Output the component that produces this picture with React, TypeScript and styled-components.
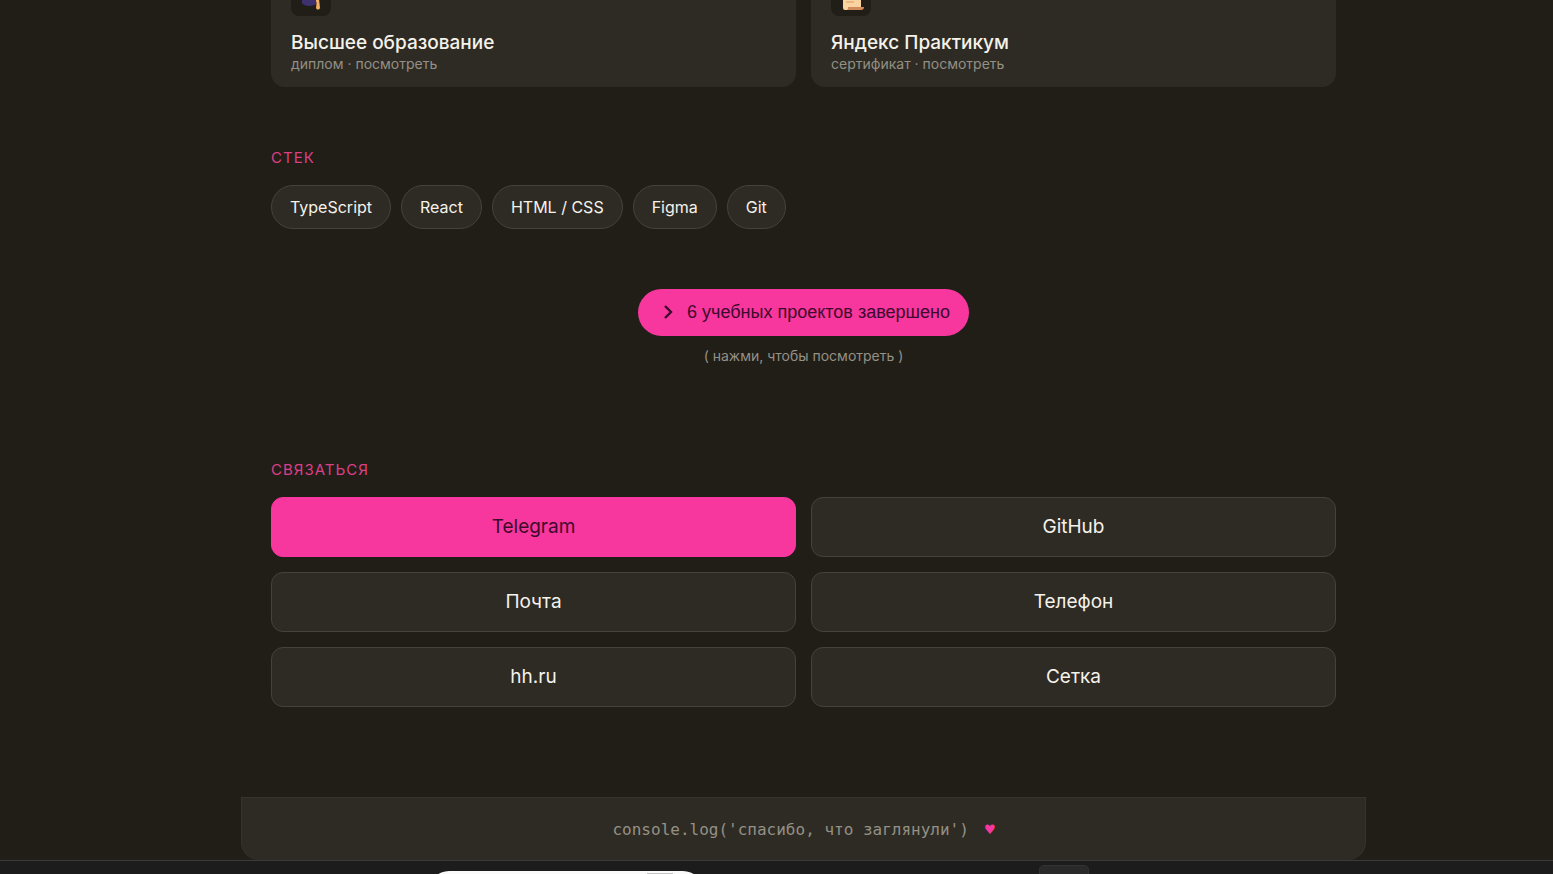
import React from 'react';
import styled, { createGlobalStyle } from 'styled-components';

const color = {
  page: '#211e18',
  surface: '#2e2b24',
  line: '#45423b',
  text: '#f5f2ea',
  muted: '#949085',
  accent: '#f7379e',
  accentText: '#dd3f86',
  onAccent: '#3d0a2c',
};

const GlobalStyle = createGlobalStyle`
  * { box-sizing: border-box; }
  body {
    margin: 0;
    background: ${color.page};
    color: ${color.text};
    font-family: Inter, "Liberation Sans", sans-serif;
  }
`;

const Shell = styled.div`
  display: flex;
  flex-direction: column;
  height: 100vh;
  overflow: hidden;
`;

const Viewport = styled.main`
  flex: 1;
  min-height: 0;
  display: flex;
  flex-direction: column;
  justify-content: flex-end;
  align-items: center;
  padding-left: 54px;
  overflow: hidden;
`;

const Page = styled.div`
  width: 100%;
  max-width: 1125px;
  flex-shrink: 0;
`;

const Content = styled.div`
  display: flex;
  flex-direction: column;
  padding: 0 30px 90px;
`;

const TwoColumns = styled.div`
  display: grid;
  grid-template-columns: 1fr 1fr;
  gap: 15px;
`;

const Card = styled.a`
  display: flex;
  flex-direction: column;
  padding: 20px 20px 14px;
  border-radius: 14px;
  background: ${color.surface};
  color: inherit;
  text-decoration: none;
`;

const CardIcon = styled.span`
  display: flex;
  align-items: center;
  justify-content: center;
  width: 40px;
  height: 40px;
  margin-bottom: 15px;
  border-radius: 8px;
  background: ${color.page};
`;

const CardTitle = styled.span`
  font-size: 19px;
  line-height: 24px;
  font-weight: 500;
`;

const CardNote = styled.span`
  font-size: 14px;
  line-height: 18px;
  color: ${color.muted};
`;

const Section = styled.section`
  margin-top: 60px;
`;

const SectionTitle = styled.h2`
  margin: 0 0 16px;
  font-size: 15px;
  line-height: 22px;
  font-weight: 400;
  letter-spacing: 1px;
  text-transform: uppercase;
  color: ${color.accentText};
`;

const Pills = styled.ul`
  display: flex;
  flex-wrap: wrap;
  gap: 10px;
  margin: 0;
  padding: 0;
  list-style: none;
`;

const Pill = styled.li`
  padding: 10px 18px;
  border: 1px solid ${color.line};
  border-radius: 22px;
  background: ${color.surface};
  font-size: 16px;
  line-height: 22px;
`;

const Projects = styled.div`
  display: flex;
  flex-direction: column;
  align-items: center;
  gap: 10px;
  margin: 60px 0 33px;
`;

const ProjectsButton = styled.button`
  display: flex;
  align-items: center;
  gap: 8px;
  height: 47px;
  padding: 0 19px 1px;
  border: 0;
  border-radius: 24px;
  background: ${color.accent};
  color: ${color.onAccent};
  font: 400 18px/24px "Liberation Sans", Arial, sans-serif;
`;

const Hint = styled.span`
  font-size: 14px;
  line-height: 20px;
  color: ${color.muted};
`;

const ContactLink = styled.a<{ $primary?: boolean }>`
  display: flex;
  align-items: center;
  justify-content: center;
  height: 60px;
  border: 1px solid ${(p) => (p.$primary ? color.accent : color.line)};
  border-radius: 12px;
  background: ${(p) => (p.$primary ? color.accent : color.surface)};
  color: ${(p) => (p.$primary ? color.onAccent : color.text)};
  font-size: 19px;
  line-height: 24px;
  text-decoration: none;
`;

const Footer = styled.footer`
  display: flex;
  align-items: center;
  justify-content: center;
  gap: 16px;
  height: 63px;
  padding-top: 2px;
  border: 1px solid #36332c;
  border-bottom: 0;
  border-radius: 0 0 18px 18px;
  background: ${color.surface};
  color: ${color.muted};
`;

const Code = styled.code`
  font: 400 16px/24px "DejaVu Sans Mono", monospace;
`;

const Heart = styled(Code).attrs({ as: 'span' })`
  color: ${color.accent};
`;

const Taskbar = styled.div`
  position: relative;
  flex-shrink: 0;
  height: 14px;
  border-top: 1px solid #3b3b3a;
  background: #1c1c1c;
  overflow: hidden;
`;

const SearchBox = styled.div`
  position: absolute;
  top: 10px;
  left: 429px;
  width: 274px;
  height: 40px;
  padding: 2px 30px;
  border-radius: 20px;
  background: #fafafa;
`;

const SearchArt = styled.div`
  width: 26px;
  height: 30px;
  margin-left: auto;
  background: #c4c4c4;
`;

const ActiveApp = styled.div`
  position: absolute;
  top: 4px;
  left: 1039px;
  width: 50px;
  height: 44px;
  border: 1px solid #333333;
  border-radius: 5px;
  background: #2a2a2a;
`;

const Cap = () => (
  <svg width="28" height="28" viewBox="0 0 28 28" aria-hidden="true">
    <path d="M5 12v9c2 4 12 4 15 0v-9z" fill="#3d3170" />
    <path d="M14 4 1 11l13 7 13-7z" fill="#4b3d7a" />
    <path d="M14 11l6 3v6" fill="none" stroke="#f0a65a" strokeWidth="2" />
    <path d="M20 17h2l1 9c-1 2-3 2-4 0z" fill="#f3ae68" />
  </svg>
);

const Scroll = () => (
  <svg width="28" height="28" viewBox="0 0 28 28" aria-hidden="true">
    <path d="M6 2h18v23H6z" fill="#fbd3a0" />
    <path d="M6 22h17v6H8a2 2 0 0 1-2-2z" fill="#fbd3a0" />
    <path d="M11 25h16c0 2-1 3-3 3H9c2 0 2-1 2-3z" fill="#d08a5c" />
    <path d="M9 8h9M9 13h9M9 20h8" stroke="#d99a66" />
  </svg>
);

const Chevron = () => (
  <svg width="22" height="22" viewBox="0 0 22 22" fill="none" aria-hidden="true">
    <path d="M8 5l6 6-6 6" stroke="currentColor" strokeWidth="2.400" />
  </svg>
);

const education = [
  { title: 'Высшее образование', note: 'диплом · посмотреть', icon: <Cap /> },
  { title: 'Яндекс Практикум', note: 'сертификат · посмотреть', icon: <Scroll /> },
];
const stack = ['TypeScript', 'React', 'HTML / CSS', 'Figma', 'Git'];
const contacts = ['Telegram', 'GitHub', 'Почта', 'Телефон', 'hh.ru', 'Сетка'];

export default function App() {
  return (
    <Shell>
      <GlobalStyle />
      <Viewport>
        <Page>
          <Content>
            <TwoColumns>
              {education.map((item) => (
                <Card key={item.title} href="#">
                  <CardIcon>{item.icon}</CardIcon>
                  <CardTitle>{item.title}</CardTitle>
                  <CardNote>{item.note}</CardNote>
                </Card>
              ))}
            </TwoColumns>
            <Section>
              <SectionTitle>Стек</SectionTitle>
              <Pills>
                {stack.map((name) => (
                  <Pill key={name}>{name}</Pill>
                ))}
              </Pills>
            </Section>
            <Projects>
              <ProjectsButton type="button">
                <Chevron />
                6 учебных проектов завершено
              </ProjectsButton>
              <Hint>( нажми, чтобы посмотреть )</Hint>
            </Projects>
            <Section>
              <SectionTitle>Связаться</SectionTitle>
              <TwoColumns>
                {contacts.map((name, i) => (
                  <ContactLink key={name} href="#" $primary={i === 0}>
                    {name}
                  </ContactLink>
                ))}
              </TwoColumns>
            </Section>
          </Content>
          <Footer>
            <Code>console.log('спасибо, что заглянули')</Code>
            <Heart>♥</Heart>
          </Footer>
        </Page>
      </Viewport>
      <Taskbar>
        <SearchBox>
          <SearchArt />
        </SearchBox>
        <ActiveApp />
      </Taskbar>
    </Shell>
  );
}
